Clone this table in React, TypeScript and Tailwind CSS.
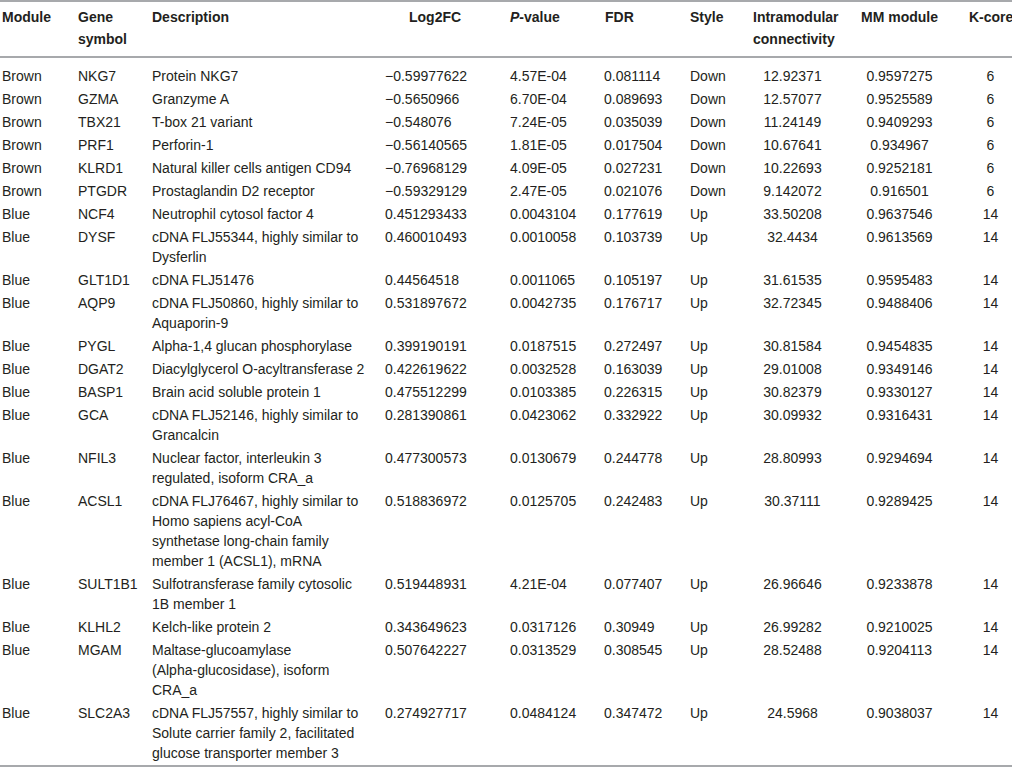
import React from "react";

type Row = {
  m: string;
  g: string;
  d: string[];
  fc: string;
  p: string;
  fdr: string;
  s: string;
  ic: string;
  mm: string;
  k: string;
};

const rows: Row[] = [
  { m: "Brown", g: "NKG7", d: ["Protein NKG7"], fc: "\u22120.59977622", p: "4.57E-04", fdr: "0.081114", s: "Down", ic: "12.92371", mm: "0.9597275", k: "6" },
  { m: "Brown", g: "GZMA", d: ["Granzyme A"], fc: "\u22120.5650966", p: "6.70E-04", fdr: "0.089693", s: "Down", ic: "12.57077", mm: "0.9525589", k: "6" },
  { m: "Brown", g: "TBX21", d: ["T-box 21 variant"], fc: "\u22120.548076", p: "7.24E-05", fdr: "0.035039", s: "Down", ic: "11.24149", mm: "0.9409293", k: "6" },
  { m: "Brown", g: "PRF1", d: ["Perforin-1"], fc: "\u22120.56140565", p: "1.81E-05", fdr: "0.017504", s: "Down", ic: "10.67641", mm: "0.934967", k: "6" },
  { m: "Brown", g: "KLRD1", d: ["Natural killer cells antigen CD94"], fc: "\u22120.76968129", p: "4.09E-05", fdr: "0.027231", s: "Down", ic: "10.22693", mm: "0.9252181", k: "6" },
  { m: "Brown", g: "PTGDR", d: ["Prostaglandin D2 receptor"], fc: "\u22120.59329129", p: "2.47E-05", fdr: "0.021076", s: "Down", ic: "9.142072", mm: "0.916501", k: "6" },
  { m: "Blue", g: "NCF4", d: ["Neutrophil cytosol factor 4"], fc: "0.451293433", p: "0.0043104", fdr: "0.177619", s: "Up", ic: "33.50208", mm: "0.9637546", k: "14" },
  { m: "Blue", g: "DYSF", d: ["cDNA FLJ55344, highly similar to", "Dysferlin"], fc: "0.460010493", p: "0.0010058", fdr: "0.103739", s: "Up", ic: "32.4434", mm: "0.9613569", k: "14" },
  { m: "Blue", g: "GLT1D1", d: ["cDNA FLJ51476"], fc: "0.44564518", p: "0.0011065", fdr: "0.105197", s: "Up", ic: "31.61535", mm: "0.9595483", k: "14" },
  { m: "Blue", g: "AQP9", d: ["cDNA FLJ50860, highly similar to", "Aquaporin-9"], fc: "0.531897672", p: "0.0042735", fdr: "0.176717", s: "Up", ic: "32.72345", mm: "0.9488406", k: "14" },
  { m: "Blue", g: "PYGL", d: ["Alpha-1,4 glucan phosphorylase"], fc: "0.399190191", p: "0.0187515", fdr: "0.272497", s: "Up", ic: "30.81584", mm: "0.9454835", k: "14" },
  { m: "Blue", g: "DGAT2", d: ["Diacylglycerol O-acyltransferase 2"], fc: "0.422619622", p: "0.0032528", fdr: "0.163039", s: "Up", ic: "29.01008", mm: "0.9349146", k: "14" },
  { m: "Blue", g: "BASP1", d: ["Brain acid soluble protein 1"], fc: "0.475512299", p: "0.0103385", fdr: "0.226315", s: "Up", ic: "30.82379", mm: "0.9330127", k: "14" },
  { m: "Blue", g: "GCA", d: ["cDNA FLJ52146, highly similar to", "Grancalcin"], fc: "0.281390861", p: "0.0423062", fdr: "0.332922", s: "Up", ic: "30.09932", mm: "0.9316431", k: "14" },
  { m: "Blue", g: "NFIL3", d: ["Nuclear factor, interleukin 3", "regulated, isoform CRA_a"], fc: "0.477300573", p: "0.0130679", fdr: "0.244778", s: "Up", ic: "28.80993", mm: "0.9294694", k: "14" },
  { m: "Blue", g: "ACSL1", d: ["cDNA FLJ76467, highly similar to", "Homo sapiens acyl-CoA", "synthetase long-chain family", "member 1 (ACSL1), mRNA"], fc: "0.518836972", p: "0.0125705", fdr: "0.242483", s: "Up", ic: "30.37111", mm: "0.9289425", k: "14" },
  { m: "Blue", g: "SULT1B1", d: ["Sulfotransferase family cytosolic", "1B member 1"], fc: "0.519448931", p: "4.21E-04", fdr: "0.077407", s: "Up", ic: "26.96646", mm: "0.9233878", k: "14" },
  { m: "Blue", g: "KLHL2", d: ["Kelch-like protein 2"], fc: "0.343649623", p: "0.0317126", fdr: "0.30949", s: "Up", ic: "26.99282", mm: "0.9210025", k: "14" },
  { m: "Blue", g: "MGAM", d: ["Maltase-glucoamylase", "(Alpha-glucosidase), isoform", "CRA_a"], fc: "0.507642227", p: "0.0313529", fdr: "0.308545", s: "Up", ic: "28.52488", mm: "0.9204113", k: "14" },
  { m: "Blue", g: "SLC2A3", d: ["cDNA FLJ57557, highly similar to", "Solute carrier family 2, facilitated", "glucose transporter member 3"], fc: "0.274927717", p: "0.0484124", fdr: "0.347472", s: "Up", ic: "24.5968", mm: "0.9038037", k: "14" },
];

export default function App() {
  return (
    <div className="w-[1012px] h-[769px] overflow-hidden bg-white text-[#231f20] font-['Liberation_Sans',Arial,sans-serif]">
      <table className="table-fixed w-[1012px] border-collapse text-[14px]">
        <colgroup>
          <col className="w-[74px]" />
          <col className="w-[74px]" />
          <col className="w-[230px]" />
          <col className="w-[120px]" />
          <col className="w-[96px]" />
          <col className="w-[88px]" />
          <col className="w-[62px]" />
          <col className="w-[106px]" />
          <col className="w-[100px]" />
          <col className="w-[62px]" />
        </colgroup>
        <thead>
          <tr className="border-t-2 border-b-2 border-[#a7a9ac] align-top font-bold leading-[22px] text-left">
            <th className="pl-[2px] pt-[4px] pb-[6px] font-bold">Module</th>
            <th className="pl-[4px] pt-[4px] pb-[6px] font-bold">Gene<br />symbol</th>
            <th className="pl-[4px] pt-[4px] pb-[6px] font-bold">Description</th>
            <th className="pl-[31px] pt-[4px] pb-[6px] font-bold">Log2FC</th>
            <th className="pl-[12px] pt-[4px] pb-[6px] font-bold"><i>P</i>-value</th>
            <th className="pl-[11px] pt-[4px] pb-[6px] font-bold">FDR</th>
            <th className="pl-[8px] pt-[4px] pb-[6px] font-bold">Style</th>
            <th className="pl-[9px] pt-[4px] pb-[6px] font-bold whitespace-nowrap">Intramodular<br />connectivity</th>
            <th className="pl-[11px] pt-[4px] pb-[6px] font-bold whitespace-nowrap">MM module</th>
            <th className="pl-[19px] pt-[4px] pb-[6px] font-bold whitespace-nowrap">K-core</th>
          </tr>
        </thead>
        <tbody className="border-b-2 border-[#a7a9ac]">
          {rows.map((r, i) => {
            const pad = i === 0 ? "pt-[8px] pb-[2px]" : "pt-[1px] pb-[2px]";
            return (
              <tr key={r.g} className="align-top leading-[20px] whitespace-nowrap">
                <td className={`pl-[2px] ${pad}`}>{r.m}</td>
                <td className={`pl-[4px] ${pad}`}>{r.g}</td>
                <td className={`pl-[4px] ${pad}`}>
                  {r.d.map((line, j) => (
                    <div key={j}>{line}</div>
                  ))}
                </td>
                <td className={`pl-[7px] ${pad}`}>{r.fc}</td>
                <td className={`pl-[12px] ${pad}`}>{r.p}</td>
                <td className={`pl-[10px] ${pad}`}>{r.fdr}</td>
                <td className={`pl-[8px] ${pad}`}>{r.s}</td>
                <td className={`pl-[9px] pr-[18px] text-center ${pad}`}>{r.ic}</td>
                <td className={`pl-[11px] pr-[12px] text-center ${pad}`}>{r.mm}</td>
                <td className={`pl-[19px] text-center ${pad}`}>{r.k}</td>
              </tr>
            );
          })}
        </tbody>
      </table>
    </div>
  );
}
